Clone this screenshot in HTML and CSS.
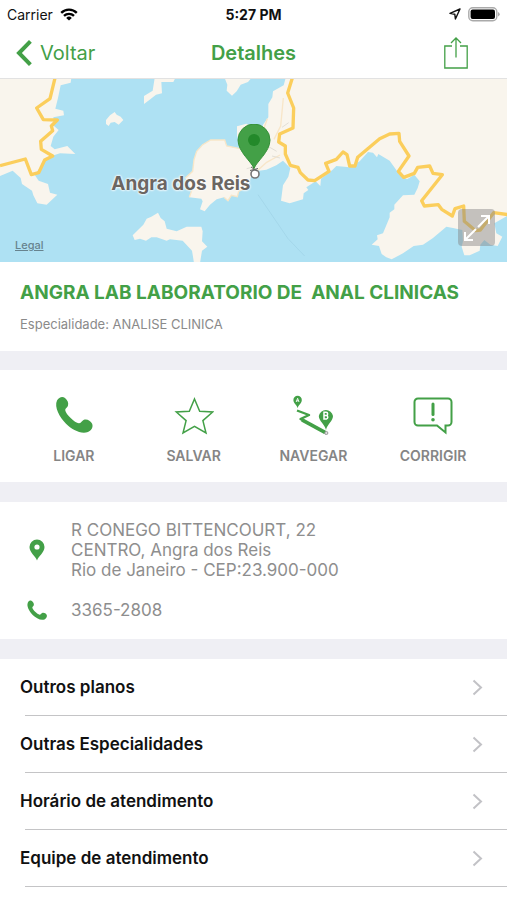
FILE: index.html
```
<!DOCTYPE html>
<html lang="pt-BR">
<head>
    <meta charset="UTF-8">
    <meta name="viewport" content="width=device-width, initial-scale=1.0">
    <title>Detalhes</title>
    <link rel="stylesheet" href="styles.css">
</head>
<body>

<header>
    <div class="status-bar">
        <div class="carrier">
            <span>Carrier</span>
            <svg width="18" height="13" viewBox="0 0 18 13" fill="none" stroke="#000" stroke-width="2.4">
                <path d="M1.2 4.8a11.2 11.2 0 0 1 15.6 0M4 7.9a7.2 7.2 0 0 1 10 0"/>
                <path d="M9 12.6 6.2 9.9a4 4 0 0 1 5.6 0z" fill="#000" stroke="none"/>
            </svg>
        </div>
        <div class="clock">5:27 PM</div>
        <div class="indicators">
            <svg width="12" height="12" viewBox="0 0 12 12" fill="none" stroke="#111" stroke-width="1.4" stroke-linejoin="round">
                <path d="M11 1 1 5.4l4.8.8.6 4.8z"/>
            </svg>
            <svg width="32" height="15" viewBox="0 0 32 15">
                <rect x=".8" y=".8" width="28" height="13" rx="4" fill="#fff" stroke="#aaa" stroke-width="1.4"/>
                <rect x="2.6" y="2.6" width="24.4" height="9.4" rx="2" fill="#000"/>
                <path d="M30.2 5v4.6q1.4-.8 1.4-2.3T30.2 5z" fill="#999"/>
            </svg>
        </div>
    </div>
    <nav class="nav-bar">
        <a class="back" href="#">
            <svg width="16" height="26" viewBox="0 0 16 26" fill="none" stroke="currentColor" stroke-width="4">
                <path d="M14.4 1.4 3 13l11.4 11.6"/>
            </svg>
            <span>Voltar</span>
        </a>
        <h1>Detalhes</h1>
        <button class="share" type="button" aria-label="Compartilhar">
            <svg width="24" height="32" viewBox="0 0 24 32" fill="none" stroke="currentColor" stroke-width="1.3">
                <path d="M8 9H.8v22h22.400V9H16M12 20.500V1M7 6l5-5 5 5"/>
            </svg>
        </button>
    </nav>
</header>

<section class="map">
    <svg class="map-art" viewBox="0 3 1521 549" preserveAspectRatio="xMidYMid slice">
        <rect width="1521" height="555" fill="#aee1f3"/>
        <g fill="#f9f5ed">
            <!-- west coast -->
            <path d="M0 0H214L212 14 182 22 174 60 166 92 190 98 192 112 160 118 162 144 176 156 160 176 152 204 164 214 202 204 226 228 180 226 136 240 126 262 104 290 116 308 144 318 150 344 172 350 140 380 112 376 100 352 96 338 66 318 62 300 38 278 0 294z"/>
            <!-- islands -->
            <path d="M464 0H526L520 12 484 12 486 46 468 50 448 66 432 78 432 54 458 38z"/>
            <path d="M318 126l12-14 14-10 6 8 12 6 8 10-14 14-12-8-12 2-6 10-8-6z"/>
            <path d="M674 0H754L744 12 722 20 710 40 696 53 680 38 682 20z"/>
            <path d="M711 145l28-8 24 10v60l-40-10-12-24z"/>
            <path d="M582 245L590 220 608 200 632 186 674 186 680 204 720 212 775 230 775 270 755 290 745 325 716 340 712 356 694 352 684 370 672 358 650 364 630 380 614 400 600 394 608 370 604 362 568 358 576 335 556 300 578 280z"/>
            <path d="M398 472L430 440 440 422 454 416 474 404 482 420 494 430 500 452 530 460 560 446 604 446 608 460 606 490 622 506 606 518 600 555H582L576 518 548 488 510 484 500 488 470 478 454 478 438 488 420 482 404 486z"/>
            <!-- mainland -->
            <g transform="translate(759)">
                <path d="M98 0L92 22 60 40 58 58 46 78 46 118 30 140 20 200 0 270 18 278 40 275 70 262 90 248 112 270 106 296 90 322 84 368 110 376 150 364 152 346 166 336 160 328 188 310 202 324 204 302 238 276 250 264 290 268 320 250 345 222 360 224 372 238 376 228 410 248 440 290 462 304 484 290 500 310 494 330 484 350 450 352 424 380 424 394 410 404 410 418 390 466 372 472 374 484 356 500 378 504 386 528 400 538 416 544 450 526 482 504 510 500 540 480 580 446 600 450 628 456 630 490 626 506 634 532 650 532 680 518 682 500 694 486 712 500 734 504 748 476 730 466 724 436 765 412V0z"/>
            </g>
        </g>
        <!-- minor roads -->
        <g fill="none" stroke="#f8e6c8" stroke-width="4">
            <path d="M556 300l22-20 4-35 8-25 18-20 24-14h42l6 18 40 8M568 358l8-23M745 325l-29 15-4 16-18-4-10 16-12-10"/>
            <path d="M850 60l-8 84-20 40M792 150l10-28M775 275l25-22 40-22"/>
        </g>
        <path d="M774 350l90 132 50 52" fill="none" stroke="#9ed2e5" stroke-width="2"/>
        <g fill="none" stroke="#e2dfd7" stroke-width="3">
            <path d="M740 272l30-8M806 206l24 14M816 234l24 6M846 148l20-14"/>
        </g>
        <!-- highways -->
        <g fill="none" stroke="#fbce5c" stroke-width="10" stroke-linejoin="round">
            <path d="M0 263L76 243 94 290 116 284 134 246 158 234 124 214 122 190 158 158 154 144 172 126 130 125 110 90 150 62 165 0"/>
            <path transform="translate(759)" d="M118 0L104 45 122 90 120 150 80 168 77 192 97 204 97 228 112 262 135 268 142 284 165 306 185 308 228 280 218 256 250 244 270 222 282 230 290 264 306 264 314 238 380 182 410 168 438 166 440 190 468 234 436 280 452 298 484 286 494 268 530 264 540 286 568 290 506 368 514 384 556 380 566 394 598 414 606 392 632 384 634 430 668 458 682 456 722 404 765 410"/>
        </g>
    </svg>
    <div class="place">
        <span class="place-name">Angra dos Reis</span>
        <svg class="pin" width="34" height="56" viewBox="0 0 34 56">
            <circle cx="18" cy="50" r="4" fill="#fff" stroke="#777" stroke-width="1.600"/>
            <path d="M13 46.500l8-2M14 43l6 4" stroke="#666" stroke-width="1"/>
            <path d="M17 44.500C15 38 1 28 1 16a16 16 0 0 1 32 0c0 12-14 22-16 28.500z" fill="#43a047" stroke="#369039"/>
            <circle cx="17" cy="16" r="6" fill="#23892a"/>
        </svg>
    </div>
    <a class="legal" href="#">Legal</a>
    <button class="expand" type="button" aria-label="Expandir mapa">
        <svg width="26" height="26" viewBox="0 0 26 26" fill="none" stroke="#fff" stroke-width="2">
            <path d="M1 25 12 14M14 12 25 1M17 1h8v8M1 17v8h8"/>
        </svg>
    </button>
</section>

<section class="summary">
    <h2>ANGRA LAB LABORATORIO DE&nbsp; ANAL CLINICAS</h2>
    <p>Especialidade: ANALISE CLINICA</p>
</section>

<section class="actions">
    <button type="button">
        <svg width="40" height="40" viewBox="0 0 40 40" fill="currentColor">
            <path d="M3 5.500C5 2 8.500 1 11 3c2.500 2 3.800 5 3 7.500-.6 2.200-3 2.700-2.700 5 .4 3.500 9.500 12.500 13.500 12.800 2.200.1 2.800-2.200 4.700-3.300 3-1.500 7 .5 8.500 3.500 1.600 3.200-.5 7-4 8.500-7 2.500-16-2.200-22-8.200C5.500 22 0 12 3 5.500z"/>
        </svg>
        <span>LIGAR</span>
    </button>
    <button type="button">
        <svg width="40" height="40" viewBox="0 0 40 40" fill="none" stroke="currentColor" stroke-width="1.500">
            <path d="M20.500 4l5.200 12.200 13 .8-9.800 8.600L32 38 20.500 31.300 9 38l3.100-12.400L2.300 17l13-.8z"/>
        </svg>
        <span>SALVAR</span>
    </button>
    <button type="button">
        <svg width="40" height="40" viewBox="0 0 40 40" fill="currentColor">
            <path d="M4.600 13.200C4 10 .4 8.500.4 5a4.200 4.200 0 0 1 8.400 0c0 3.500-3.500 5-4.200 8.200z"/>
            <path d="M3.200 7 4.600 3.300 6 7M3.700 5.800h1.800" fill="none" stroke="#fff" stroke-width=".9"/>
            <path d="M4 15.500l12 4.500-8.500 4L33 38" fill="none" stroke="currentColor" stroke-width="2.400" stroke-linejoin="round"/>
            <path d="M9 24.800 32 37.300" fill="none" stroke="currentColor" stroke-width="3.600"/>
            <circle cx="33.300" cy="38" r="1.600" fill="#ddd" stroke="#888" stroke-width=".8"/>
            <path d="M33 35c-1-5.500-7.200-9-7.200-14a7.200 7.200 0 0 1 14.200 0c0 5-6 8.500-7 14z"/>
            <path d="M31 17.300v6.800h2.400a1.800 1.800 0 0 0 0-3.500H31h2a1.600 1.600 0 0 0 0-3.300z" fill="none" stroke="#fff" stroke-width="1.500"/>
        </svg>
        <span>NAVEGAR</span>
    </button>
    <button type="button">
        <svg width="40" height="40" viewBox="0 0 40 40" fill="none" stroke="currentColor" stroke-width="2">
            <path d="M5 3.500h30a3.500 3.500 0 0 1 3.500 3.500v20a3.500 3.500 0 0 1-3.500 3.500h-2.500v7L24 30.500H5A3.500 3.500 0 0 1 1.500 27V7A3.500 3.500 0 0 1 5 3.500z"/>
            <path d="M20 9v10.500" stroke-width="3" stroke-linecap="round"/>
            <circle cx="20" cy="24.800" r="1.800" fill="currentColor" stroke="none"/>
        </svg>
        <span>CORRIGIR</span>
    </button>
</section>

<section class="contact">
    <div class="contact-row">
        <svg width="34" height="22" viewBox="0 0 34 22">
            <path d="M17 21.500C15.500 17 9.500 13.500 9.500 8a7.500 7.500 0 0 1 15 0c0 5.500-6 9-7.500 13.500z" fill="currentColor"/>
            <circle cx="17" cy="8" r="2.600" fill="#fff"/>
        </svg>
        <address>R CONEGO BITTENCOURT, 22<br>CENTRO, Angra dos Reis<br>Rio de Janeiro - CEP:23.900-000</address>
    </div>
    <div class="contact-row">
        <svg width="34" height="22" viewBox="-11 -1 62 41" fill="currentColor">
            <path d="M3 5.500C5 2 8.500 1 11 3c2.500 2 3.800 5 3 7.500-.6 2.200-3 2.700-2.700 5 .4 3.500 9.500 12.500 13.500 12.800 2.200.1 2.800-2.200 4.700-3.300 3-1.500 7 .5 8.500 3.500 1.600 3.200-.5 7-4 8.500-7 2.500-16-2.200-22-8.200C5.500 22 0 12 3 5.500z"/>
        </svg>
        <a href="tel:33652808">3365-2808</a>
    </div>
</section>

<ul class="menu">
    <li><a href="#"><span>Outros planos</span><svg width="11" height="17" viewBox="0 0 11 17"><path d="M1.500 1.500l7.500 7-7.500 7"/></svg></a></li>
    <li><a href="#"><span>Outras Especialidades</span><svg width="11" height="17" viewBox="0 0 11 17"><path d="M1.500 1.500l7.500 7-7.500 7"/></svg></a></li>
    <li><a href="#"><span>Horário de atendimento</span><svg width="11" height="17" viewBox="0 0 11 17"><path d="M1.500 1.500l7.500 7-7.500 7"/></svg></a></li>
    <li><a href="#"><span>Equipe de atendimento</span><svg width="11" height="17" viewBox="0 0 11 17"><path d="M1.500 1.500l7.500 7-7.500 7"/></svg></a></li>
</ul>

</body>
</html>
```
FILE: styles.css
```
* {
    box-sizing: border-box;
}
body {
    margin: 0;
    font-family: Inter, sans-serif;
    background-color: #fff;
    color: #111;
}
svg {
    display: block;
    flex-shrink: 0;
}
h1, h2, p, ul {
    margin: 0;
    padding: 0;
}
a {
    color: inherit;
    text-decoration: none;
}
button {
    padding: 0;
    border: none;
    background: none;
    font-family: inherit;
    color: #43a047;
    cursor: pointer;
}
.status-bar {
    display: grid;
    grid-template-columns: 1fr auto 1fr;
    align-items: center;
    height: 28px;
    padding: 0 7px;
    font-size: 14px;
}
.carrier, .indicators {
    display: flex;
    align-items: center;
    gap: 7px;
}
.indicators {
    justify-content: flex-end;
}
.clock {
    font-weight: 700;
}
.nav-bar {
    display: grid;
    grid-template-columns: 1fr auto 1fr;
    align-items: center;
    height: 51px;
    padding: 0 16px;
    border-bottom: 1px solid #e2e2e2;
    color: #43a047;
}
.back {
    display: flex;
    align-items: center;
    gap: 8px;
    font-size: 20px;
}
.nav-bar h1 {
    font-size: 20px;
    font-weight: 600;
}
.share {
    justify-self: end;
    margin-right: 23px;
}
.map {
    position: relative;
    height: 183px;
    overflow: hidden;
}
.map-art {
    width: 100%;
    height: 100%;
}
.place {
    position: absolute;
    top: 45px;
    left: 50%;
}
.place-name {
    position: absolute;
    top: 48px;
    right: 3px;
    font-size: 19px;
    font-weight: 700;
    line-height: 24px;
    white-space: nowrap;
    color: #6b6662;
    text-shadow: 0 0 2px #fff, 0 0 2px #fff, 0 0 3px #fff;
}
.pin {
    position: absolute;
    top: 0;
    left: -17px;
}
.legal {
    position: absolute;
    bottom: 9px;
    left: 15px;
    font-size: 11px;
    font-weight: 500;
    line-height: 16px;
    color: #67838e;
    text-decoration: underline;
}
.expand {
    position: absolute;
    right: 12px;
    bottom: 16px;
    display: grid;
    place-items: center;
    width: 37px;
    height: 37px;
    border-radius: 4px;
    background-color: rgba(130, 130, 130, 0.45);
}
.summary {
    padding: 18px 20px;
    border-bottom: 19px solid #efeff4;
}
.summary h2 {
    font-size: 19px;
    font-weight: 700;
    line-height: 26px;
    color: #43a047;
}
.summary p {
    margin-top: 10px;
    font-size: 13px;
    line-height: 17px;
    color: #8a8a8a;
}
.actions {
    display: grid;
    grid-template-columns: repeat(4, 1fr);
    padding: 25px 14px 18px;
    border-bottom: 20px solid #efeff4;
}
.actions button {
    display: flex;
    flex-direction: column;
    align-items: center;
    gap: 12px;
    font-size: 14px;
    font-weight: 600;
    line-height: 17px;
}
.actions span {
    color: #858585;
}
.contact {
    display: flex;
    flex-direction: column;
    gap: 19px;
    padding: 18px 20px;
    border-bottom: 20px solid #efeff4;
    font-size: 17px;
    line-height: 20px;
    color: #8e8e8e;
}
.contact-row {
    display: flex;
    align-items: center;
    gap: 17px;
}
.contact-row svg {
    color: #43a047;
}
.contact address {
    font-style: normal;
}
.menu {
    list-style: none;
}
.menu a {
    display: flex;
    align-items: center;
    justify-content: space-between;
    height: 56px;
    padding: 0 24px 0 20px;
    font-size: 17px;
    font-weight: 600;
}
.menu li::after {
    content: "";
    display: block;
    height: 1px;
    margin-left: 25px;
    background-color: #c4c4c6;
}
.menu path {
    fill: none;
    stroke: #c2c2c6;
    stroke-width: 2;
}
```
